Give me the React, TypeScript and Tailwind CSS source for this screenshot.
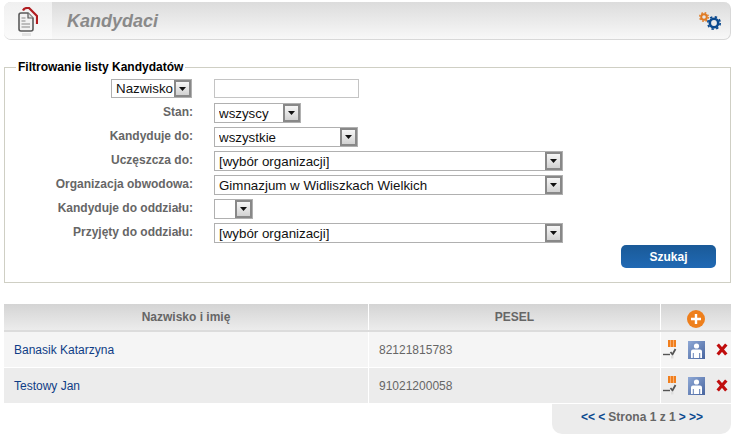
const font = "font-['Liberation_Sans',Arial,sans-serif]";

function Arrow() {
  return (
    <span className="flex h-full w-[17px] shrink-0 items-center justify-center border-2 border-[#888] bg-gradient-to-b from-[#f6f6f6] to-[#d2d2d2]">
      <svg width="7" height="4" viewBox="0 0 7 4"><path d="M0 0h7L3.500 4z" fill="#111" /></svg>
    </span>
  );
}

function Select({ text, width }: { text: string; width: string }) {
  return (
    <div className={`flex h-[20px] items-center justify-between border border-[#b0b0b0] bg-white pl-[4px] pr-0 text-[13.33px] leading-none text-[#111] ${width}`}>
      <span className="truncate pt-[2px]">{text}</span>
      <Arrow />
    </div>
  );
}

function Row({ label, children }: { label: React.ReactNode; children: React.ReactNode }) {
  return (
    <div className="flex h-[24px] items-start">
      <div className="w-[184px] shrink-0 pt-[2px] text-right text-[12px] font-bold leading-[14px] text-[#666]">{label}</div>
      <div className="ml-[21px]">{children}</div>
    </div>
  );
}

function Gears() {
  return (
    <svg width="23" height="18" viewBox="0 0 23 18">
      <circle cx="5" cy="5" r="2.800" fill="none" stroke="#e07b24" strokeWidth="2" />
      <circle cx="5" cy="5" r="4.300" fill="none" stroke="#e07b24" strokeWidth="1.400" strokeDasharray="1.700 1.700" />
      <circle cx="15" cy="11" r="4.200" fill="none" stroke="#0b4a8f" strokeWidth="2.600" />
      <circle cx="15" cy="11" r="6.200" fill="none" stroke="#0b4a8f" strokeWidth="1.700" strokeDasharray="2.400 2.470" />
    </svg>
  );
}

function DocIcon() {
  return (
    <svg width="20" height="30" viewBox="0 0 20 30">
      <path d="M5 3.500Q6 1 9 1h2l8 8v8" fill="none" stroke="#b01c20" strokeWidth="2.200" />
      <path d="M1 8q0-2 2-2h7l5 5v11q0 2-2 2H3q-2 0-2-2z" fill="#f2f2f2" stroke="#5a5a5a" strokeWidth="1.600" />
      <path d="M10 6v5h5" fill="#ddd" stroke="#5a5a5a" strokeWidth="1.200" />
      <path d="M3.500 11h4M3.500 14h4M3.500 17h8.500M3.500 20h8.500" stroke="#888" strokeWidth="1.200" />
      <path d="M4 26h9v3H4z" fill="#e4e4e4" />
    </svg>
  );
}

function EditIcon() {
  return (
    <svg width="14" height="19" viewBox="0 0 14 19">
      <rect x="5" y="0" width="8" height="7" fill="#f07f1e" />
      <path d="M7.500 0v7M10.500 0v7" stroke="#fbb47a" strokeWidth="0.900" />
      <path d="M0 14.500h7" stroke="#555" strokeWidth="1.400" />
      <path d="M7.500 12l2 2.500L12.500 9" fill="none" stroke="#555" strokeWidth="1.800" />
      <rect x="8" y="15.500" width="2.500" height="3" fill="#ddd" />
    </svg>
  );
}

function PersonIcon({ id }: { id: string }) {
  return (
    <svg width="17" height="18" viewBox="0 0 17 18">
      <defs>
        <linearGradient id={id} x1="0" y1="0" x2="1" y2="1">
          <stop offset="0" stopColor="#8fa9d6" />
          <stop offset="1" stopColor="#48659f" />
        </linearGradient>
      </defs>
      <rect width="17" height="18" fill={`url(#${id})`} />
      <circle cx="8.500" cy="5" r="2.600" fill="#fff" />
      <path d="M3 17v-6.500Q3 8.500 5 8.500h7q2 0 2 2V17h-1.800v-5h-1v5H5.800v-5h-1v5z" fill="#fff" />
    </svg>
  );
}

function XIcon() {
  return (
    <svg width="12" height="13" viewBox="0 0 12 13">
      <path d="M1.700 1.500l8.600 10M10.300 1.500l-8.600 10" stroke="#c00d0d" strokeWidth="3.200" />
    </svg>
  );
}

function PlusIcon() {
  return (
    <svg width="18" height="18" viewBox="0 0 18 18">
      <circle cx="9" cy="9" r="9" fill="#ee7f1c" />
      <path d="M9 4v10M4 9h10" stroke="#fff" strokeWidth="2.400" />
    </svg>
  );
}

function TableRow({ name, pesel, bg, id }: { name: string; pesel: string; bg: string; id: string }) {
  return (
    <div className={`flex h-[35px] text-[12px] ${bg}`}>
      <div className="flex w-[364px] items-center pl-[10px] text-[#0f3d86]">{name}</div>
      <div className="flex w-[293px] items-center border-x border-white pl-[10px] text-[#666]">{pesel}</div>
      <div className="flex flex-1 items-center pl-[2px]">
        <EditIcon />
        <span className="ml-[11px] flex"><PersonIcon id={id} /></span>
        <span className="ml-[11px] flex"><XIcon /></span>
      </div>
    </div>
  );
}

export default function App() {
  return (
    <div className={`h-[438px] w-[735px] overflow-hidden bg-white px-[4px] pt-[2px] ${font}`}>
      <header className="flex h-[38px] w-[727px] items-center rounded-[7px] border-b border-r border-[#d8d8d8] bg-gradient-to-b from-[#dcdcdc] to-[#f8f8f8]">
        <div className="flex h-full w-[48px] items-center justify-center rounded-l-[7px] bg-gradient-to-b from-[#f0f0f0] to-[#fbfbfb] pt-[3px]">
          <DocIcon />
        </div>
        <h1 className="ml-[15px] text-[18px] font-bold italic leading-none text-[#8a8a8a]">Kandydaci</h1>
        <div className="ml-auto mr-[8px] flex"><Gears /></div>
      </header>

      <fieldset className="mt-[20px] h-[223px] w-[727px] border border-[#cfcfc4] pl-[4px] pt-[6px]">
        <legend className="ml-[7px] px-[2px] text-[12px] font-bold leading-[14px] text-black">Filtrowanie listy Kandydatów</legend>
        <div className="flex flex-col">
          <div className="flex h-[23px] items-start">
            <div className="ml-[102px] mt-[-1px] flex h-[19px] w-[81px] items-center border border-[#b0b0b0] pl-[4px] text-[13.33px] leading-none text-[#111]">
              <span className="w-[58px] pt-[1px]">Nazwisko</span><Arrow />
            </div>
            <div className="ml-[22px] mt-[-1px] h-[19px] w-[145px] border border-[#c4c4c4] bg-white" />
          </div>
          <Row label="Stan:"><Select text="wszyscy" width="w-[87px]" /></Row>
          <Row label="Kandyduje do:"><Select text="wszystkie" width="w-[144px]" /></Row>
          <Row label="Uczęszcza do:"><Select text="[wybór organizacji]" width="w-[349px]" /></Row>
          <Row label="Organizacja obwodowa:"><Select text="Gimnazjum w Widliszkach Wielkich" width="w-[349px]" /></Row>
          <Row label="Kandyduje do oddziału:"><Select text="" width="w-[39px]" /></Row>
          <Row label="Przyjęty do oddziału:"><Select text="[wybór organizacji]" width="w-[349px]" /></Row>
        </div>
        <div className="mr-[14px] mt-[-2px] flex justify-end">
          <button className="h-[23px] w-[95px] rounded-[5px] bg-gradient-to-b from-[#1a5a98] to-[#2069b4] text-[12px] font-bold text-white">Szukaj</button>
        </div>
      </fieldset>

      <div className="mt-[21px] w-[727px]">
        <div className="flex h-[28px] items-center border-b-2 border-[#dcdcdc] bg-gradient-to-b from-[#d4d4d4] to-[#ececec] text-[12px] font-bold text-[#666]">
          <div className="w-[364px] text-center">Nazwisko i imię</div>
          <div className="flex h-full w-[293px] items-center justify-center border-x border-white">PESEL</div>
          <div className="flex flex-1 justify-center pt-[4px]"><PlusIcon /></div>
        </div>
        <TableRow name="Banasik Katarzyna" pesel="82121815783" bg="bg-[#f5f5f5]" id="p1" />
        <div className="h-[1px] bg-white" />
        <TableRow name="Testowy Jan" pesel="91021200058" bg="bg-[#ececec]" id="p2" />
      </div>
      <div className="ml-auto mt-[1px] flex h-[30px] w-[179px] items-center justify-center rounded-b-[10px] bg-[#ececec] pb-[4px] pl-[1px] text-[12px] font-bold text-[#666]">
        <span className="text-[#0b4a8f]">&lt;&lt; &lt;</span>
        <span className="mx-[3px]">Strona 1 z 1</span>
        <span className="text-[#0b4a8f]">&gt; &gt;&gt;</span>
      </div>
    </div>
  );
}
